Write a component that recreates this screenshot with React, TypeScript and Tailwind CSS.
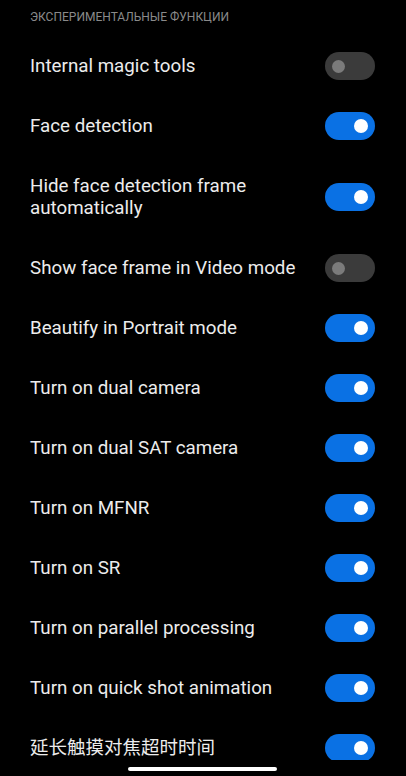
import React from "react";

const rows: { label: string; on: boolean; cjk?: boolean; two?: boolean }[] = [
  { label: "Internal magic tools", on: false },
  { label: "Face detection", on: true },
  { label: "Hide face detection frame automatically", on: true, two: true },
  { label: "Show face frame in Video mode", on: false },
  { label: "Beautify in Portrait mode", on: true },
  { label: "Turn on dual camera", on: true },
  { label: "Turn on dual SAT camera", on: true },
  { label: "Turn on MFNR", on: true },
  { label: "Turn on SR", on: true },
  { label: "Turn on parallel processing", on: true },
  { label: "Turn on quick shot animation", on: true },
  { label: "延长触摸对焦超时时间", on: true, cjk: true },
];

function Toggle({ on }: { on: boolean }) {
  return on ? (
    <div className="w-[50px] h-[28px] rounded-full bg-[#0a71e4] flex items-center justify-end pr-[7px] shrink-0">
      <div className="w-[14px] h-[14px] rounded-full bg-white" />
    </div>
  ) : (
    <div className="w-[50px] h-[28px] rounded-full bg-[#3b3b3b] flex items-center justify-start pl-[7px] shrink-0">
      <div className="w-[13px] h-[13px] rounded-full bg-[#7b7b7b]" />
    </div>
  );
}

export default function App() {
  return (
    <div
      className="relative w-[406px] h-[776px] overflow-hidden bg-black text-[#ececec]"
      style={{ fontFamily: 'Roboto, "Noto Sans CJK SC", sans-serif' }}
    >
      <div className="pl-[30px] pt-[9px] h-[36px] text-[12px] leading-[16px] text-[#8a8a8a] uppercase">
        Экспериментальные функции
      </div>
      {rows.map((r) => (
        <div
          key={r.label}
          className={`flex items-center justify-between pl-[30px] pr-[31px] ${
            r.two ? "h-[82px]" : "h-[60px]"
          }`}
        >
          <div
            className={`${
              r.cjk ? "text-[18.5px]" : "text-[18.75px]"
            } font-normal leading-[22px] max-w-[280px]`}
          >
            {r.label}
          </div>
          <Toggle on={r.on} />
        </div>
      ))}
      <div className="absolute left-0 right-0 bottom-0 h-[16px] bg-black">
        <div className="absolute left-[128px] top-[7px] w-[149px] h-[4px] rounded-full bg-white" />
      </div>
    </div>
  );
}
